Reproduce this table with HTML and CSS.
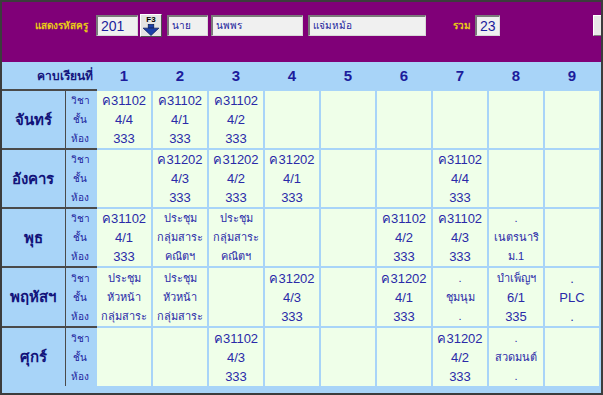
FILE: index.html
```html
<!DOCTYPE html>
<html lang="th">
<head>
<meta charset="utf-8">
<title>ตารางสอนครู</title>
<link rel="stylesheet" href="styles.css">
</head>
<body>
<div class="window">
  <div class="topbar">
    <span class="lbl lbl-code">แสดงรหัสครู</span>
    <span class="field f-code num">201</span>
    <span class="f3btn"><span class="f3txt">F3</span>
      <svg width="18" height="13" viewBox="0 0 18 13"><rect x="6" y="0.5" width="6" height="4" fill="#1b3fa8" stroke="#0b1d5a" stroke-width="0.8"/><path d="M0.5 4.5 H17.5 L9 12.5 Z" fill="#1b3fa8" stroke="#0b1d5a" stroke-width="0.8"/></svg>
    </span>
    <span class="field f-title">นาย</span>
    <span class="field f-first">นพพร</span>
    <span class="field f-last">แจ่มหม้อ</span>
    <span class="lbl lbl-sum">รวม</span>
    <span class="field f-sum num">23</span>
    <span class="edge-btn"></span>
  </div>
  <table class="tt">
    <colgroup>
      <col class="c-day"><col class="c-lab">
      <col><col><col><col><col><col><col><col><col>
    </colgroup>
    <thead>
      <tr class="hrow">
        <th colspan="2" class="h-period">คาบเรียนที่</th>
        <th>1</th><th>2</th><th>3</th><th>4</th><th>5</th><th>6</th><th>7</th><th>8</th><th>9</th>
      </tr>
    </thead>
    <tbody>
      <tr>
        <td class="day">จันทร์</td>
        <td class="lab">วิชา<br>ชั้น<br>ห้อง</td>
        <td class="d">ค31102<br>4/4<br>333</td>
        <td class="d">ค31102<br>4/1<br>333</td>
        <td class="d">ค31102<br>4/2<br>333</td>
        <td class="d"></td><td class="d"></td><td class="d"></td><td class="d"></td><td class="d"></td><td class="d"></td>
      </tr>
      <tr>
        <td class="day">อังคาร</td>
        <td class="lab">วิชา<br>ชั้น<br>ห้อง</td>
        <td class="d"></td>
        <td class="d">ค31202<br>4/3<br>333</td>
        <td class="d">ค31202<br>4/2<br>333</td>
        <td class="d">ค31202<br>4/1<br>333</td>
        <td class="d"></td><td class="d"></td>
        <td class="d">ค31102<br>4/4<br>333</td>
        <td class="d"></td><td class="d"></td>
      </tr>
      <tr>
        <td class="day">พุธ</td>
        <td class="lab">วิชา<br>ชั้น<br>ห้อง</td>
        <td class="d">ค31102<br>4/1<br>333</td>
        <td class="d th-s">ประชุม<br>กลุ่มสาระ<br>คณิตฯ</td>
        <td class="d th-s">ประชุม<br>กลุ่มสาระ<br>คณิตฯ</td>
        <td class="d"></td><td class="d"></td>
        <td class="d">ค31102<br>4/2<br>333</td>
        <td class="d">ค31102<br>4/3<br>333</td>
        <td class="d th-s">.<br>เนตรนาริ<br>ม.1</td>
        <td class="d"></td>
      </tr>
      <tr>
        <td class="day">พฤหัสฯ</td>
        <td class="lab">วิชา<br>ชั้น<br>ห้อง</td>
        <td class="d th-s">ประชุม<br>หัวหน้า<br>กลุ่มสาระ</td>
        <td class="d th-s">ประชุม<br>หัวหน้า<br>กลุ่มสาระ</td>
        <td class="d"></td>
        <td class="d">ค31202<br>4/3<br>333</td>
        <td class="d"></td>
        <td class="d">ค31202<br>4/1<br>333</td>
        <td class="d th-s">.<br>ชุมนุม<br>.</td>
        <td class="d"><span class="th-s">บำเพ็ญฯ</span><br>6/1<br>335</td>
        <td class="d">.<br>PLC<br>.</td>
      </tr>
      <tr>
        <td class="day">ศุกร์</td>
        <td class="lab">วิชา<br>ชั้น<br>ห้อง</td>
        <td class="d"></td><td class="d"></td>
        <td class="d">ค31102<br>4/3<br>333</td>
        <td class="d"></td><td class="d"></td><td class="d"></td>
        <td class="d">ค31202<br>4/2<br>333</td>
        <td class="d th-s">.<br>สวดมนต์<br>.</td>
        <td class="d"></td>
      </tr>
    </tbody>
  </table>
</div>
</body>
</html>
```
FILE: styles.css
```css
* { box-sizing: border-box; }
html, body { margin: 0; padding: 0; background: #ffffff; }
body { font-family: "Liberation Sans", "Noto Sans", "DejaVu Sans", sans-serif; }

.window {
  width: 603px;
  height: 395px;
  border: 2px solid #3c3c3c;
  overflow: hidden;
  background: #a8d4f8;
}

.topbar {
  height: 60px;
  background: #800078;
  display: flex;
  align-items: flex-start;
  padding-top: 13px;
  padding-left: 31px;
  position: relative;
}

.lbl {
  color: #e8c816;
  font-size: 10px;
  font-weight: bold;
  line-height: 21px;
}
.lbl-code { width: 63px; padding-left: 2px; }
.lbl-sum { margin-left: 27px; width: 22px; }

.field {
  height: 21px;
  background: #f0f0f0;
  border-top: 2px solid #7a7a7a;
  border-left: 2px solid #7a7a7a;
  border-right: 1px solid #d8d8d8;
  border-bottom: 1px solid #d8d8d8;
  color: #1c1c9c;
  font-size: 10px;
  line-height: 18px;
  padding-left: 3px;
  white-space: nowrap;
  overflow: hidden;
}
.field.num { font-size: 14px; }
.f-code { width: 42px; }
.f-title { width: 41px; margin-left: 5px; }
.f-first { width: 92px; margin-left: 3px; }
.f-last { width: 118px; margin-left: 5px; }
.f-sum { width: 25px; margin-left: 0; }

.f3btn {
  width: 22px;
  height: 23px;
  margin-top: -1px;
  margin-left: 2px;
  background: #e4e4e4;
  border-top: 1px solid #ffffff;
  border-left: 1px solid #ffffff;
  border-right: 1px solid #505050;
  border-bottom: 1px solid #505050;
  display: flex;
  flex-direction: column;
  align-items: center;
}
.f3txt {
  font-size: 8px;
  line-height: 8px;
  color: #000;
  font-weight: bold;
  margin-top: 1px;
}
.f3btn svg { display: block; }

.edge-btn {
  margin-left: auto;
  width: 8px;
  height: 21px;
  background: #e8e8e8;
  border-top: 1px solid #ffffff;
  border-left: 1px solid #ffffff;
  border-bottom: 1px solid #808080;
}

.tt {
  border-collapse: collapse;
  table-layout: fixed;
  width: 599px;
}
.c-day { width: 63px; }
.c-lab { width: 31px; }

.hrow th {
  height: 28px;
  padding: 0;
  color: #1c1c9c;
  font-size: 15px;
  font-weight: bold;
  text-align: center;
  background: #a8d4f8;
  border-bottom: 2px solid #a8d4f8;
}
.hrow th.h-period {
  text-align: right;
  padding-right: 3px;
  font-size: 12px;
  color: #15157e;
  border-bottom: 2px solid #4a4a4a;
}

tbody td {
  padding: 0;
  height: 59px;
  vertical-align: middle;
  text-align: center;
}
td.day {
  background: #a8d4f8;
  color: #12127a;
  font-size: 15px;
  font-weight: bold;
  border-right: 1px solid #4a4a4a;
  border-bottom: 2px solid #4a4a4a;
}
td.lab {
  background: #a8d4f8;
  color: #1c1c9c;
  font-size: 10px;
  line-height: 19px;
  border-bottom: 2px solid #4a4a4a;
}
td.d {
  background: #efffe9;
  color: #2a2aa8;
  font-size: 13px;
  line-height: 19px;
  border: 2px solid #a8d4f8;
  white-space: nowrap;
  overflow: hidden;
}
tbody tr:last-child td { border-bottom: none; }
.th-s { font-size: 11px; }
td.d.th-s { font-size: 11px; }
```
